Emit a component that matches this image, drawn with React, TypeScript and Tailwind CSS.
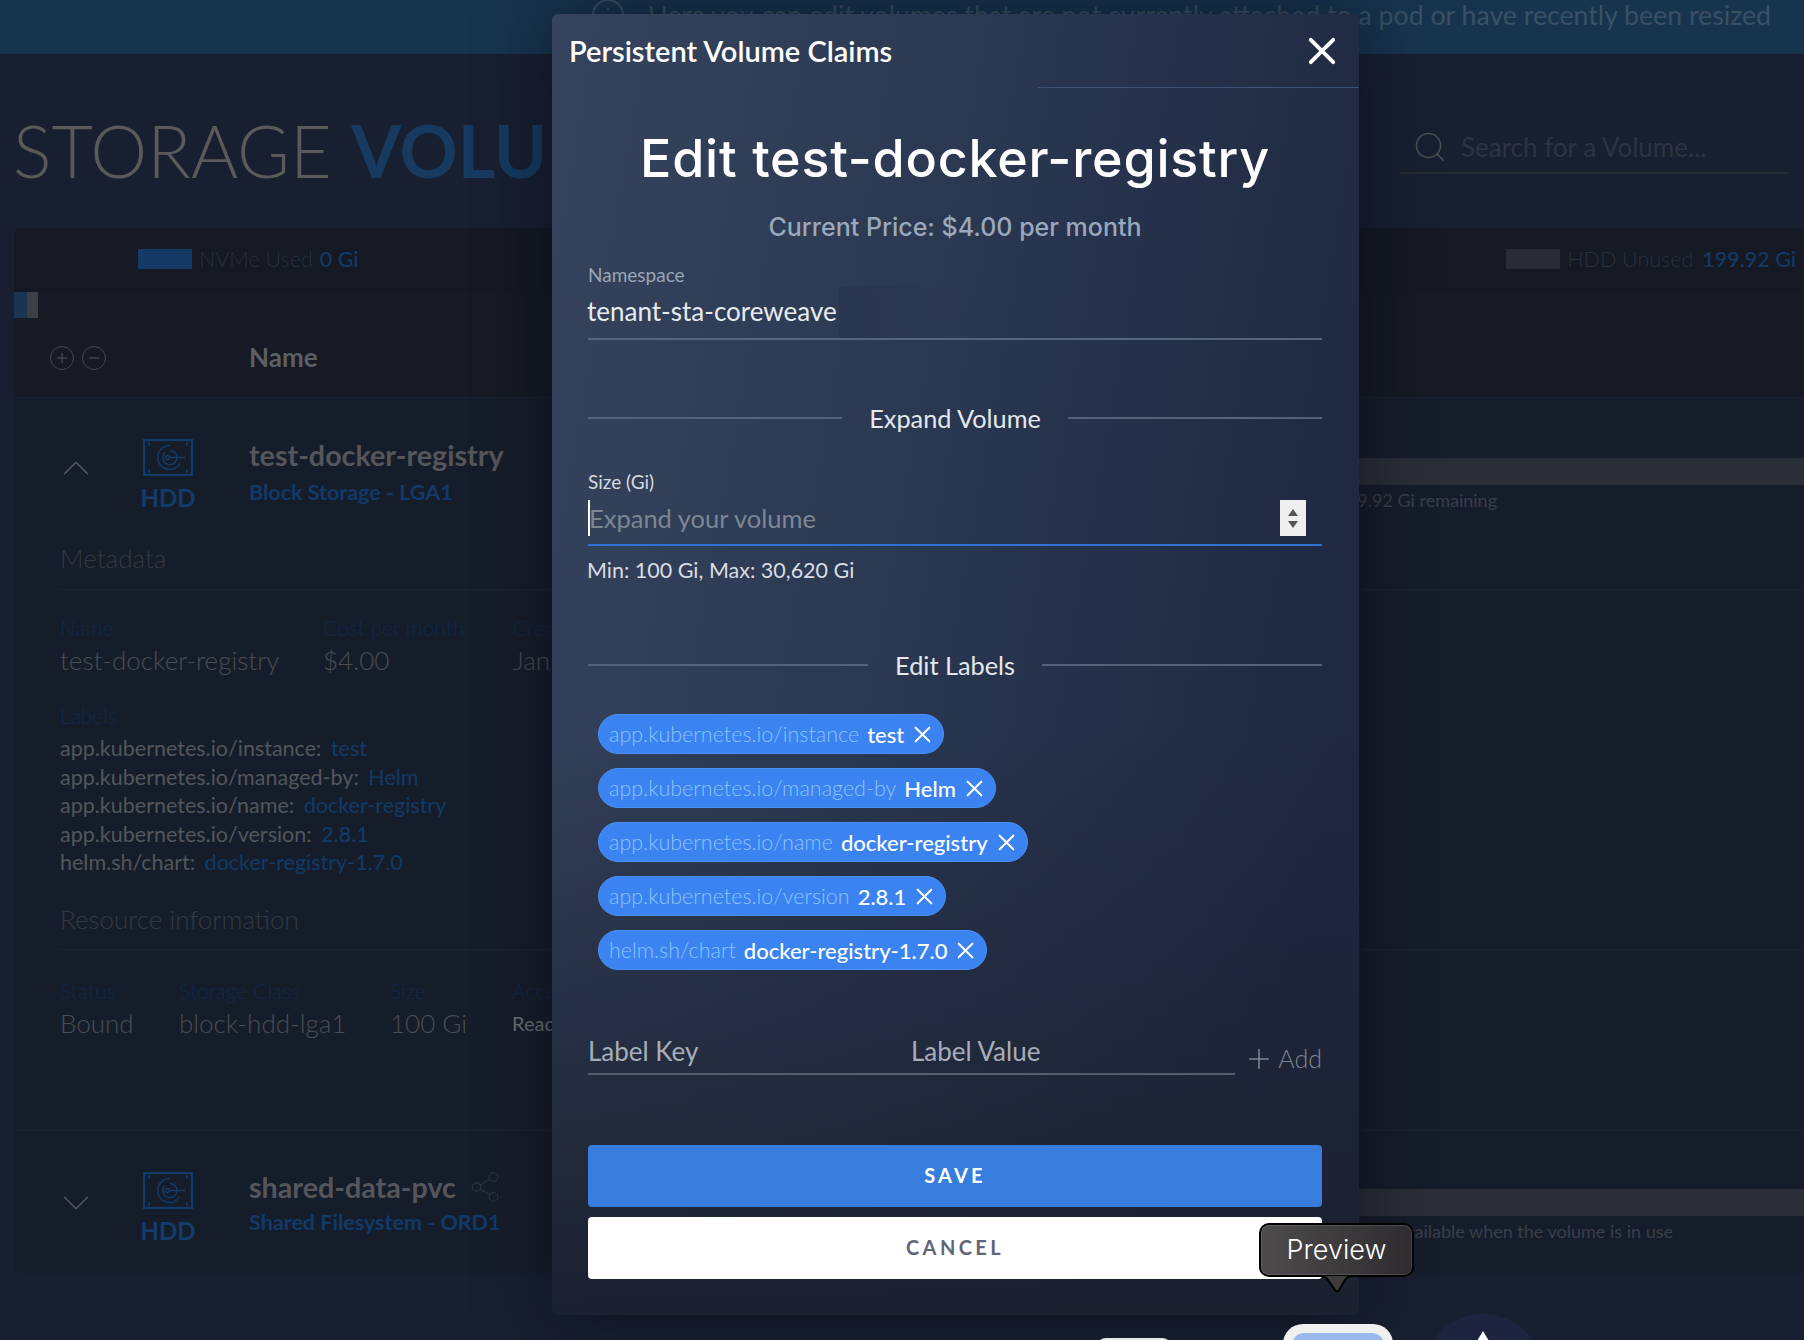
import { ChevronDown, ChevronUp, Info, Minus, Plus, Search, Share2 } from 'lucide-react'

const CHIPS = [
  { name: 'app.kubernetes.io/instance', value: 'test' },
  { name: 'app.kubernetes.io/managed-by', value: 'Helm' },
  { name: 'app.kubernetes.io/name', value: 'docker-registry' },
  { name: 'app.kubernetes.io/version', value: '2.8.1' },
  { name: 'helm.sh/chart', value: 'docker-registry-1.7.0' },
]

function XMark({ size, width }: { size: number; width: number }) {
  return (
    <svg width={size} height={size} viewBox="0 0 20 20" fill="none" stroke="currentColor" strokeWidth={width} strokeLinecap="round" aria-hidden="true">
      <path d="M2 2 18 18M18 2 2 18" />
    </svg>
  )
}

function HddIcon() {
  return (
    <svg width="50" height="37" viewBox="0 0 50 37" fill="none" stroke="#123c6b" strokeWidth="1.4" aria-hidden="true">
      <rect x="1" y="1" width="48" height="35" strokeWidth="2.2" />
      <path d="M27 6.500a12 12 0 1 0 10 18" />
      <path d="M27 11.500a7 7 0 1 1 0 14 7 7 0 0 1-5-12" />
      <path d="M27 18.500h15" />
      <circle cx="24.500" cy="18.500" r="2" />
      <path d="M5 5h2M43 5h2M5 32h2M43 32h2" strokeWidth="3" />
    </svg>
  )
}

function Divider({ title }: { title: string }) {
  return (
    <div className="flex h-8 items-center gap-[27px]">
      <div className="h-[2px] flex-1 bg-[#566278]" />
      <span className="-mt-px text-[25.300px] leading-8 text-[#e4e8ec]">{title}</span>
      <div className="h-[2px] flex-1 bg-[#566278]" />
    </div>
  )
}

function Field({ label, value, className, small }: { label: string; value: string; className: string; small?: boolean }) {
  return (
    <div className={className}>
      <div className="text-[21px] leading-[26px] font-light text-[#10294a]">{label}</div>
      {small ? (
        <div className="mt-[3px] whitespace-nowrap text-[20px] leading-8 text-[#6d6f73]">{value}</div>
      ) : (
        <div className="mt-[3px] whitespace-nowrap text-[26px] leading-8 font-light text-[#4a4d52]">{value}</div>
      )}
    </div>
  )
}

function UsageBar({ top, text, right }: { top: string; text: string; right: string }) {
  return (
    <div className={`ml-auto w-[700px] ${top}`}>
      <div className="h-[27px] bg-[#2a2e37]" />
      <div className={`mt-[3px] text-right text-[18px] leading-6 text-[#3a3f49] ${right}`}>{text}</div>
    </div>
  )
}

function Page() {
  return (
    <div className="flex h-full flex-col">
      <div className="flex h-[54px] justify-end gap-[22px] bg-[#17344f] pr-[33px] text-[26.700px] leading-[30px] whitespace-nowrap text-[#3a5064]">
        <Info className="-mt-[3px] h-9 w-9" strokeWidth={1.5} />
        <span>Here you can edit volumes that are not currently attached to a pod or have recently been resized</span>
      </div>

      <div className="flex h-[174px] justify-between pr-4 pl-[13px]">
        <h1 className="mt-[56px] text-[72px] leading-20 font-light whitespace-nowrap text-[#5a5a5a]">
          STORAGE <span className="font-bold text-[#163a60]">VOLUMES</span>
        </h1>
        <div className="mt-[68px] flex h-[52px] w-[388px] items-center gap-[13px] border-b-2 border-[#262a33] pl-3">
          <Search className="h-9 w-9 text-[#4a4d52]" strokeWidth={1.1} />
          <span className="text-[26px] text-[#2d3340]">Search for a Volume...</span>
        </div>
      </div>

      <div className="ml-[14px] h-[1045px] rounded-lg bg-[#161d2a]">
        <div className="flex h-16 items-center rounded-t-lg bg-[#141924] pr-2 pb-[2px] pl-[124px] text-[21.500px] whitespace-nowrap">
          <div className="h-5 w-[54px] bg-[#163a66]" />
          <span className="ml-[7px] font-light text-[#2a3040]">NVMe Used</span>
          <span className="ml-[7px] font-medium text-[#123a66]">0 Gi</span>
          <div className="ml-auto h-5 w-[54px] bg-[#292c36]" />
          <span className="ml-[7px] font-light text-[#2a3040]">HDD Unused</span>
          <span className="ml-[9px] font-medium text-[#123a66]">199.92 Gi</span>
        </div>
        <div className="flex h-[26px] bg-[#151a25]">
          <div className="w-[13px] bg-[#1a3552]" />
          <div className="w-[11px] bg-[#3c3f46]" />
        </div>
        <div className="flex h-20 items-center border-b border-[#1a2130] bg-[#151a25] pl-9">
          <div className="flex h-6 w-6 items-center justify-center rounded-full border border-[#44474d]">
            <Plus className="h-4 w-4 text-[#44474d]" />
          </div>
          <div className="ml-2 flex h-6 w-6 items-center justify-center rounded-full border border-[#44474d]">
            <Minus className="h-4 w-4 text-[#44474d]" />
          </div>
          <span className="ml-[143px] text-[26px] font-bold text-[#5e5f63]">Name</span>
        </div>

        <div className="flex h-[130px] pl-[46px]">
          <ChevronUp className="mt-[47px] -ml-[7px] h-[46px] w-[46px] text-[#55575c]" strokeWidth={0.8} />
          <div className="ml-[42px] flex w-[54px] flex-col items-center pt-[41px]">
            <HddIcon />
            <span className="mt-[8px] text-[24px] leading-7 font-bold text-[#123c6b]">HDD</span>
          </div>
          <div className="ml-[54px] pt-[39px]">
            <div className="text-[28.700px] leading-9 font-bold whitespace-nowrap text-[#55565b]">test-docker-registry</div>
            <div className="mt-[5px] text-[21.500px] leading-7 font-bold whitespace-nowrap text-[#123a68]">Block Storage - LGA1</div>
          </div>
          <UsageBar top="pt-[60px]" text="199.92 Gi remaining" right="pr-[307px]" />
        </div>

        <div className="pl-[46px]">
          <div className="mt-[14px] border-b border-[#1d2431] pb-[15px] text-[26px] leading-8 font-light text-[#35393f]">Metadata</div>
          <div className="mt-[25px] flex">
            <Field label="Name" value="test-docker-registry" className="w-[263px]" />
            <Field label="Cost per month" value="$4.00" className="w-[190px]" />
            <Field label="Created" value="Jan 20, 2022" className="w-[190px]" />
          </div>
          <div className="mt-[27px] text-[21px] leading-[26px] font-light text-[#10294a]">Labels</div>
          <div className="mt-[5px] text-[21.500px] leading-[28.500px] text-[#53565b]">
            {CHIPS.map((chip) => (
              <div key={chip.name}>
                {chip.name}: <span className="ml-1 text-[#123a66]">{chip.value}</span>
              </div>
            ))}
          </div>
          <div className="mt-[26px] border-b border-[#1d2431] pb-[14px] text-[26px] leading-8 font-light text-[#35393f]">Resource information</div>
          <div className="mt-[28px] flex">
            <Field label="Status" value="Bound" className="w-[119px]" />
            <Field label="Storage Class" value="block-hdd-lga1" className="w-[211px]" />
            <Field label="Size" value="100 Gi" className="w-[122px]" />
            <Field label="Access Mode" value="ReadWriteOnce" className="w-[190px]" small />
          </div>
        </div>

        <div className="mt-[91px] flex h-[144px] border-t border-[#1d2431] pl-[46px]">
          <ChevronDown className="mt-[49px] -ml-[7px] h-[46px] w-[46px] text-[#55575c]" strokeWidth={0.8} />
          <div className="ml-[42px] flex w-[54px] flex-col items-center pt-[41px]">
            <HddIcon />
            <span className="mt-[8px] text-[24px] leading-7 font-bold text-[#123c6b]">HDD</span>
          </div>
          <div className="ml-[54px] pt-[38px]">
            <div className="flex h-9 items-center gap-3 text-[28.700px] leading-9 font-bold whitespace-nowrap text-[#55565b]">
              shared-data-pvc
              <Share2 className="h-[34px] w-[34px] text-[#2d3138]" strokeWidth={0.9} />
            </div>
            <div className="mt-[3px] text-[21.500px] leading-7 font-bold whitespace-nowrap text-[#123a68]">Shared Filesystem - ORD1</div>
          </div>
          <UsageBar top="pt-[58px]" text="available when the volume is in use" right="pr-[131px]" />
        </div>
      </div>
    </div>
  )
}

function Modal() {
  return (
    <div className="absolute top-[14px] left-[552px] h-[1301px] w-[807px] rounded-md bg-[linear-gradient(to_bottom,transparent_55%,#1c2130_100%),linear-gradient(100deg,#35445c_0%,#2b3852_42%,#1e2840_88%)] shadow-[0_0_70px_rgba(5,8,14,0.55)]">
      <div className="flex h-[73px] items-center justify-between pr-[23px] pl-[17px] text-white">
        <h2 className="text-[29px] font-semibold">Persistent Volume Claims</h2>
        <XMark size={28} width={2.8} />
      </div>
      <div className="ml-auto h-px w-[321px] bg-[#3e5273]" />

      <div className="pr-[37px] pl-9">
        <h1 className="mt-[41px] text-center font-['Inter',sans-serif] text-[52px] leading-[60px] font-medium tracking-[0.015em] whitespace-nowrap text-white">Edit test-docker-registry</h1>
        <p className="mt-[22px] text-center font-['Inter',sans-serif] text-[25px] leading-8 font-medium text-[#9aa8bb]">Current Price: $4.00 per month</p>

        <div className="mt-[21px] text-[19px] leading-[22px] text-[#9aa6b8]">Namespace</div>
        <div className="flex h-[54px] items-center border-b-2 border-[#56647c] text-[26px] text-[#e8ecf0]">
          <span className="-mt-[2px] -ml-px">tenant-sta-coreweave</span>
          <div className="ml-[2px] h-full w-[190px] bg-[linear-gradient(to_right,#2a3650,transparent)]" />
        </div>

        <div className="mt-[62px]">
          <Divider title="Expand Volume" />
        </div>

        <div className="mt-[37px] text-[19px] leading-[22px] text-[#d5dae0]">Size (Gi)</div>
        <div className="flex h-[53px] items-start border-b-2 border-[#2f73d0] pt-[7px]">
          <div className="h-9 w-[2px] bg-white" />
          <span className="-ml-px text-[25.500px] leading-9 text-[#7c8795]">Expand your volume</span>
          <div className="mr-4 ml-auto flex h-9 w-[26px] flex-col items-center justify-center gap-[5px] bg-[#efefef]">
            <div className="h-0 w-0 border-x-[5px] border-b-[7px] border-x-transparent border-b-[#555]" />
            <div className="h-0 w-0 border-x-[5px] border-t-[7px] border-x-transparent border-t-[#555]" />
          </div>
        </div>
        <div className="mt-[10px] -ml-px text-[21.500px] leading-7 text-[#d9dde3]">Min: 100 Gi, Max: 30,620 Gi</div>

        <div className="mt-[65px]">
          <Divider title="Edit Labels" />
        </div>

        <div className="mt-[33px] flex flex-col items-start gap-[14px] pl-[10px]">
          {CHIPS.map((chip) => (
            <div key={chip.name} className="flex h-10 items-center rounded-full border border-[#4a90f5] bg-[#3a83f1] pr-[12px] pl-[10px] text-[21.500px] whitespace-nowrap">
              <span className="font-light text-[#8cc4fb]">{chip.name}</span>
              <span className="ml-2 text-[22px] font-medium text-white">{chip.value}</span>
              <span className="ml-[10px] text-white">
                <XMark size={17} width={2.4} />
              </span>
            </div>
          ))}
        </div>

        <div className="mt-[65px] flex items-end">
          <div className="flex h-10 w-[648px] items-start border-b-2 border-[#565d6c] text-[26px] leading-8 text-[#a7aeb9]">
            <span className="w-[323px]">Label Key</span>
            <span>Label Value</span>
          </div>
          <div className="ml-[8px] flex h-8 items-center gap-[3px] text-[25px] font-light text-[#7b8592]">
            <Plus className="h-8 w-8" strokeWidth={1.2} />
            Add
          </div>
        </div>

        <button className="mt-[70px] h-[62px] w-full rounded bg-[#377dde] pb-[3px] text-[20px] font-bold tracking-[0.16em] text-white">SAVE</button>
        <button className="mt-[10px] h-[62px] w-full rounded bg-white pb-[2px] text-[20px] font-bold tracking-[0.17em] text-[#5f6675]">CANCEL</button>
      </div>
    </div>
  )
}

function PreviewTooltip() {
  return (
    <div className="absolute top-[1223px] left-[1259px] flex h-[54px] w-[155px] items-center justify-center rounded-[10px] border-2 border-black bg-[linear-gradient(to_right,#4d4b4c,#2e2c2e)] font-['Inter',sans-serif] text-[27px] font-light text-white shadow-[inset_0_0_0_1px_rgba(255,255,255,0.12)]">
      Preview
      <svg className="absolute top-[50px] left-[60px]" width="34" height="20" viewBox="0 0 34 20" aria-hidden="true">
        <path d="M1 1h32l-2 0c-3 0-5 1-7 4l-6 10c-1 2-3 2-4 0L7 5C5 2 3 1 0 1Z" fill="#3d3b3c" />
        <path d="M0 1c3 0 5 1 7 4l7 10c1 2 3 2 4 0l6-10c2-3 4-4 7-4" fill="none" stroke="black" strokeWidth="2" />
      </svg>
    </div>
  )
}

function Dock() {
  return (
    <>
      <div className="absolute top-[1338px] left-[1096px] h-5 w-[76px] rounded-t-[10px] bg-[#e8e8e8]" />
      <div className="absolute top-[1324px] left-[1283px] h-10 w-[110px] rounded-t-[20px] bg-[#f0f0f0] pt-[9px] pr-[9px] pl-[9px]">
        <div className="h-10 rounded-t-[12px] bg-[#9ab8ec]" />
      </div>
      <div className="absolute top-[1314px] left-[1423px] flex h-[120px] w-[120px] justify-center rounded-full bg-[#1c2440] pt-[17px]">
        <div className="h-0 w-0 border-x-[12px] border-b-[20px] border-x-transparent border-b-white" />
      </div>
    </>
  )
}

export default function App() {
  return (
    <div className="relative h-[1340px] w-[1804px] overflow-hidden bg-[#181f30] font-['Lato',sans-serif]">
      <Page />
      <Modal />
      <Dock />
      <PreviewTooltip />
    </div>
  )
}
